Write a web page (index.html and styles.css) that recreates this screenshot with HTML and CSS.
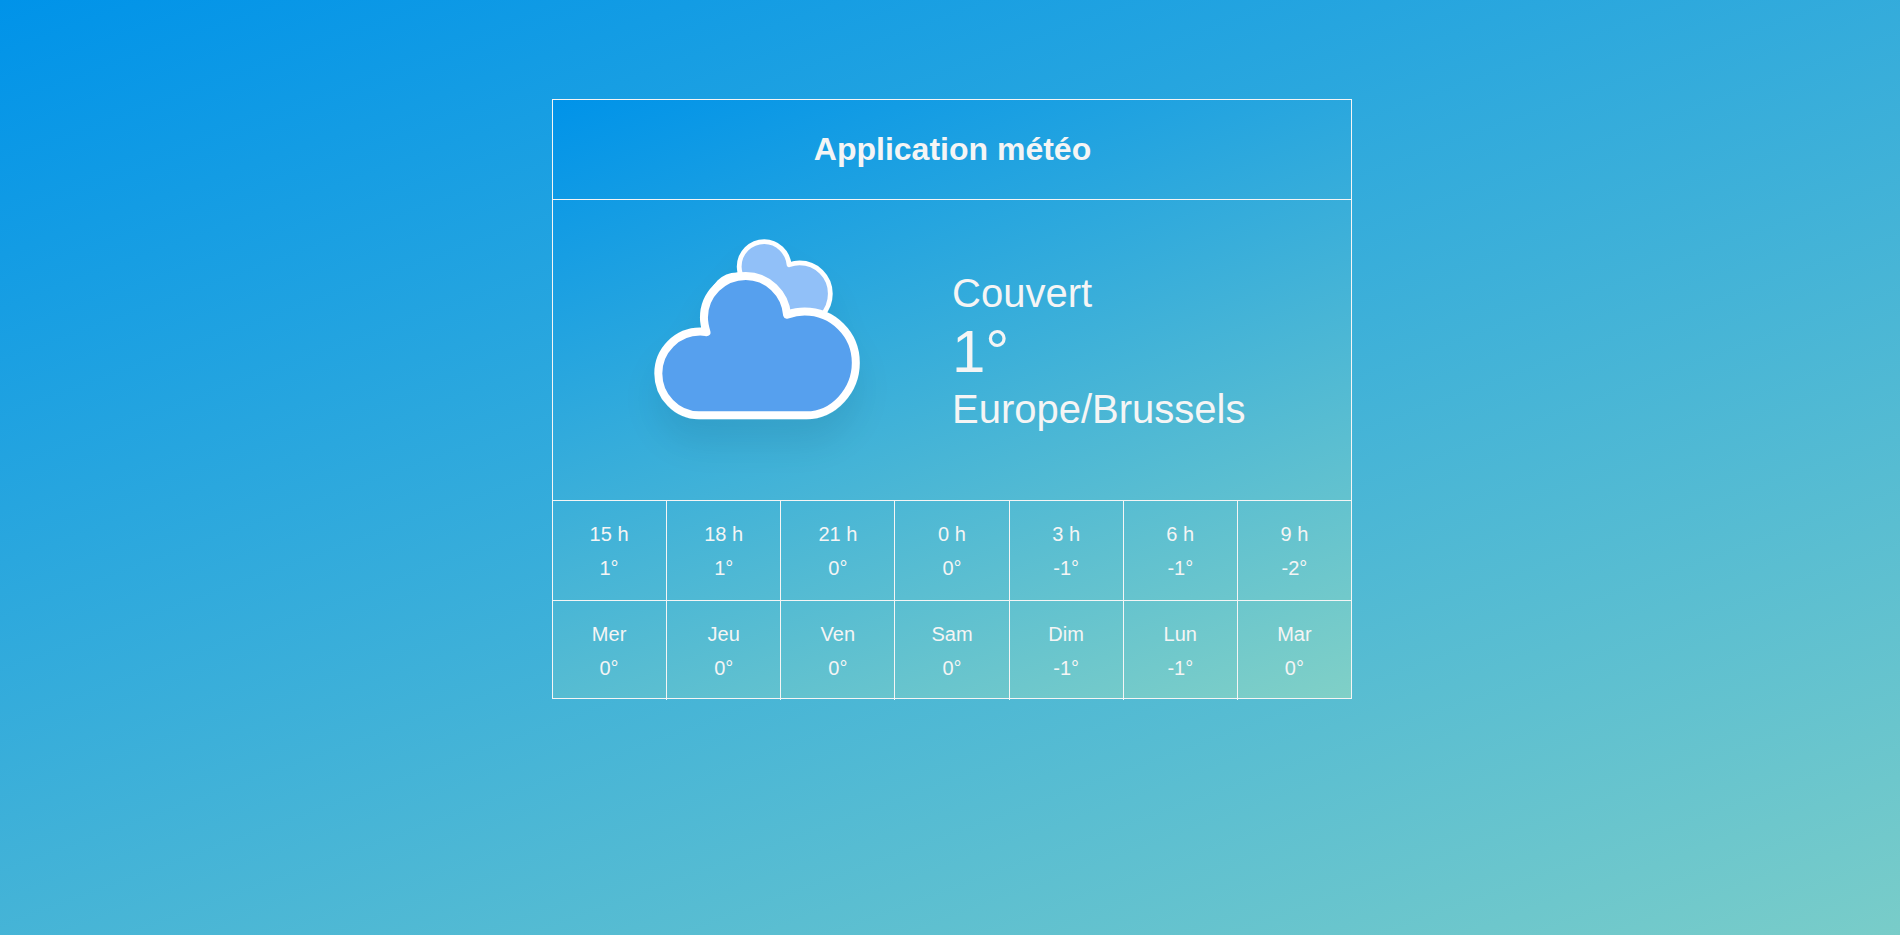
FILE: index.html
```html
<!DOCTYPE html>
<html lang="fr">
<head>
    <meta charset="UTF-8">
    <meta name="viewport" content="width=device-width, initial-scale=1.0">
    <title>Application météo</title>
    <link rel="stylesheet" href="styles.css">
</head>
<body>
    <div class="app">
        <h1 class="app-title">Application météo</h1>

        <div class="current">
            <svg class="current-icon" viewBox="-0.75 9.35 63.84 48" aria-hidden="true">
                <defs>
                    <filter id="blur" x="-30%" y="-30%" width="160%" height="170%">
                        <feGaussianBlur in="SourceAlpha" stdDeviation="3"/>
                        <feOffset dx="0" dy="4"/>
                        <feComponentTransfer>
                            <feFuncA type="linear" slope="0.08"/>
                        </feComponentTransfer>
                        <feMerge>
                            <feMergeNode/>
                            <feMergeNode in="SourceGraphic"/>
                        </feMerge>
                    </filter>
                    <path id="cloud" d="M47.7,35.4c0-4.6-3.7-8.2-8.2-8.2c-1,0-1.9,0.2-2.8,0.5c-0.3-3.4-3.1-6.2-6.6-6.2c-3.7,0-6.7,3-6.7,6.7c0,0.8,0.2,1.6,0.4,2.3c-0.3-0.1-0.7-0.1-1-0.1c-3.7,0-6.7,3-6.7,6.7c0,3.6,2.9,6.7,6.5,6.7l17.2,0C44.2,43.8,47.7,39.8,47.7,35.4z"/>
                </defs>
                <g filter="url(#blur)">
                    <use href="#cloud" class="cloud-back" transform="translate(15,3.1) scale(0.6)"/>
                    <use href="#cloud" class="cloud-front"/>
                </g>
            </svg>
            <div class="current-info">
                <div class="current-text">Couvert</div>
                <div class="current-temp">1°</div>
                <div class="current-text">Europe/Brussels</div>
            </div>
        </div>

        <div class="forecast">
            <div class="cell"><span>15 h</span><span>1°</span></div>
            <div class="cell"><span>18 h</span><span>1°</span></div>
            <div class="cell"><span>21 h</span><span>0°</span></div>
            <div class="cell"><span>0 h</span><span>0°</span></div>
            <div class="cell"><span>3 h</span><span>-1°</span></div>
            <div class="cell"><span>6 h</span><span>-1°</span></div>
            <div class="cell"><span>9 h</span><span>-2°</span></div>
        </div>

        <div class="forecast">
            <div class="cell"><span>Mer</span><span>0°</span></div>
            <div class="cell"><span>Jeu</span><span>0°</span></div>
            <div class="cell"><span>Ven</span><span>0°</span></div>
            <div class="cell"><span>Sam</span><span>0°</span></div>
            <div class="cell"><span>Dim</span><span>-1°</span></div>
            <div class="cell"><span>Lun</span><span>-1°</span></div>
            <div class="cell"><span>Mar</span><span>0°</span></div>
        </div>
    </div>
</body>
</html>
```

FILE: styles.css
```css
* {
    box-sizing: border-box;
}
html {
    height: 100%;
}
body {
    min-height: 100%;
    margin: 0;
    padding: 99px 0 0 4px;
    font-family: "Liberation Sans", Arial, sans-serif;
    color: whitesmoke;
    background: linear-gradient(160deg, #0093E9 0%, #80D0C7 100%) no-repeat;
    background-size: 1904px 1030px;
}
.app {
    width: 800px;
    height: 600px;
    margin: 0 auto;
    border: 1px solid whitesmoke;
    background: linear-gradient(160deg, #0093E9 0%, #80D0C7 100%);
}
.app-title {
    height: 100px;
    margin: 0 -1px 0 0;
    border-bottom: 1px solid whitesmoke;
    font-size: 32px;
    font-weight: bold;
    line-height: 99px;
    text-align: center;
}
.current {
    display: flex;
    height: 300px;
}
.current-icon {
    flex: 0 0 399px;
    height: 300px;
}
.cloud-front,
.cloud-back {
    stroke: #fff;
    stroke-width: 1.28;
    stroke-linejoin: round;
}
.cloud-front {
    fill: #57A0EE;
}
.cloud-back {
    fill: #91C0F8;
}
.current-info {
    display: flex;
    flex-direction: column;
    justify-content: center;
    padding-top: 2px;
}
.current-text {
    font-size: 40px;
}
.current-temp {
    margin: 1px 0;
    font-size: 60px;
}
.forecast {
    display: grid;
    grid-template-columns: repeat(7, 1fr);
    height: 100px;
    margin-left: -1px;
    border-top: 1px solid whitesmoke;
}
.cell {
    display: flex;
    flex-direction: column;
    align-items: center;
    justify-content: center;
    border-left: 1px solid whitesmoke;
    font-size: 20px;
    line-height: 34px;
}
.cell:first-child {
    border-left: 0;
}
```
